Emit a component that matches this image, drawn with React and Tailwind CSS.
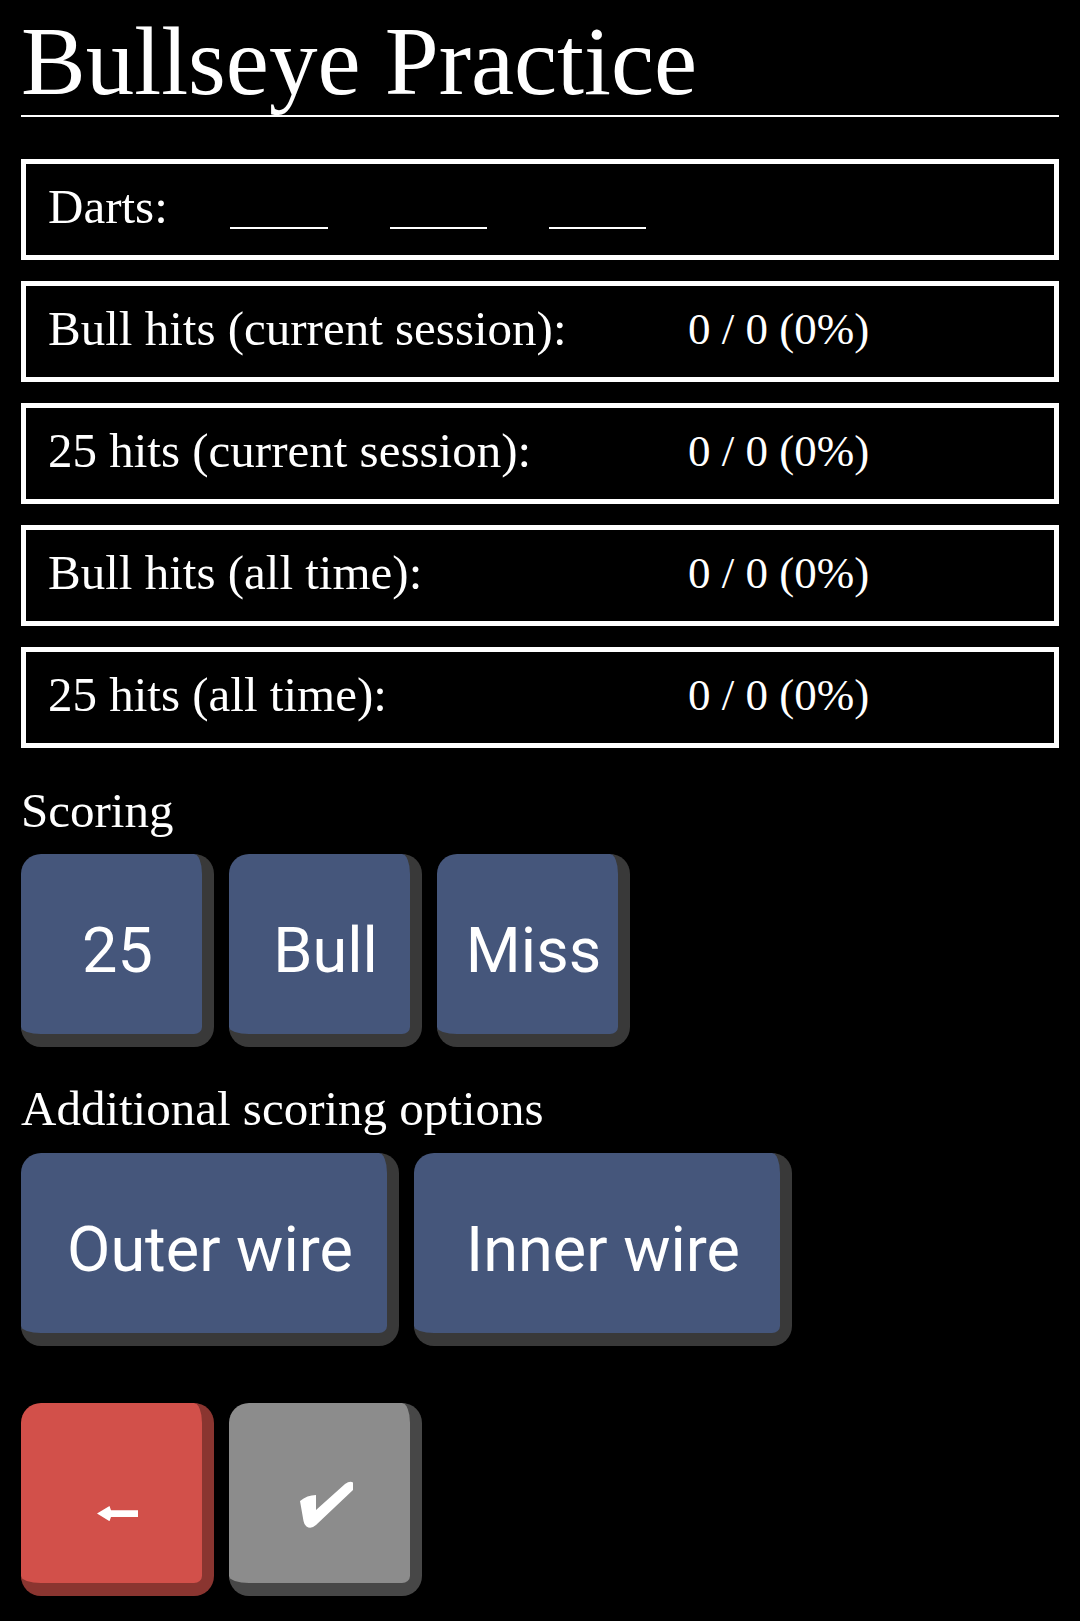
import React from "react";

const serif = "font-['Liberation_Serif','Times_New_Roman',serif]";

function StatRow({ label, value }) {
  return (
    <div className="flex h-[101px] items-center border-[5px] border-white pb-[5px] pl-[22px]">
      <div className={`w-[640px] shrink-0 text-[49px] leading-[48px] text-white ${serif}`}>{label}</div>
      <div className={`text-[45px] leading-[48px] text-white ${serif}`}>{value}</div>
    </div>
  );
}

function Key({ children, w = "w-[193px]", face, edge }) {
  return (
    <div
      className={`flex h-[193px] ${w} shrink-0 items-center justify-center rounded-[20px] border-r-[12px] border-b-[13px] pl-[12px] pt-[13px] ${face} ${edge}`}
    >
      {children}
    </div>
  );
}

const keyText = "font-['Roboto','Noto_Sans',sans-serif] text-[63px] text-white leading-none";

export default function App() {
  return (
    <div className="min-h-[1621px] bg-black px-[21px] pb-[26px]">
      <h1
        className={`border-b-2 border-white pt-[14px] pb-[5px] text-[97px] leading-[96px] font-normal text-white ${serif}`}
      >
        Bullseye Practice
      </h1>

      <div className="mt-[42px] flex flex-col gap-[21px]">
        <div className="flex h-[101px] items-center border-[5px] border-white pb-[5px] pl-[22px]">
          <div className={`text-[49px] leading-[48px] text-white ${serif}`}>Darts:</div>
          <div className="ml-[62px] h-[44px] w-[98px] border-b-2 border-white" />
          <div className="ml-[62px] h-[44px] w-[97px] border-b-2 border-white" />
          <div className="ml-[62px] h-[44px] w-[97px] border-b-2 border-white" />
        </div>
        <StatRow label="Bull hits (current session):" value="0 / 0 (0%)" />
        <StatRow label="25 hits (current session):" value="0 / 0 (0%)" />
        <StatRow label="Bull hits (all time):" value="0 / 0 (0%)" />
        <StatRow label="25 hits (all time):" value="0 / 0 (0%)" />
      </div>

      <div className={`mt-[39px] text-[49px] leading-[48px] text-white ${serif}`}>Scoring</div>
      <div className="mt-[19px] flex gap-[15px]">
        <Key face="bg-[#45567b]" edge="border-[#393939]">
          <span className={keyText}>25</span>
        </Key>
        <Key face="bg-[#45567b]" edge="border-[#393939]">
          <span className={keyText}>Bull</span>
        </Key>
        <Key face="bg-[#45567b]" edge="border-[#393939]">
          <span className={keyText}>Miss</span>
        </Key>
      </div>

      <div className={`mt-[38px] text-[49px] leading-[48px] text-white ${serif}`}>
        Additional scoring options
      </div>
      <div className="mt-[20px] flex gap-[15px]">
        <Key w="w-[378px]" face="bg-[#45567b]" edge="border-[#393939]">
          <span className={keyText}>Outer wire</span>
        </Key>
        <Key w="w-[378px]" face="bg-[#45567b]" edge="border-[#393939]">
          <span className={keyText}>Inner wire</span>
        </Key>
      </div>

      <div className="mt-[57px] flex gap-[15px]">
        <Key face="bg-[#d2504a]" edge="border-[#8a3530]">
          <svg width="41" height="15" viewBox="0 0 41 15" className="mt-[28px]" aria-label="back">
            <path d="M0 7.6 L12.5 0 L14 4.3 L41 4.3 L41 11 L14 11 L12.5 15.2 Z" fill="#ffffff" />
          </svg>
        </Key>
        <Key face="bg-[#8c8c8c]" edge="border-[#474747]">
          <svg width="54" height="47" viewBox="0 0 54 47" className="mt-[10px]" aria-label="confirm">
            <path
              d="M1 20 Q8 14 17 14 L17 29 L46 3 Q51 -0.5 54 1.5 L54 9 L17 44 Q12 48.5 7.5 45.5 Q5 43 4.5 40 Z"
              fill="#ffffff"
            />
          </svg>
        </Key>
      </div>
    </div>
  );
}
